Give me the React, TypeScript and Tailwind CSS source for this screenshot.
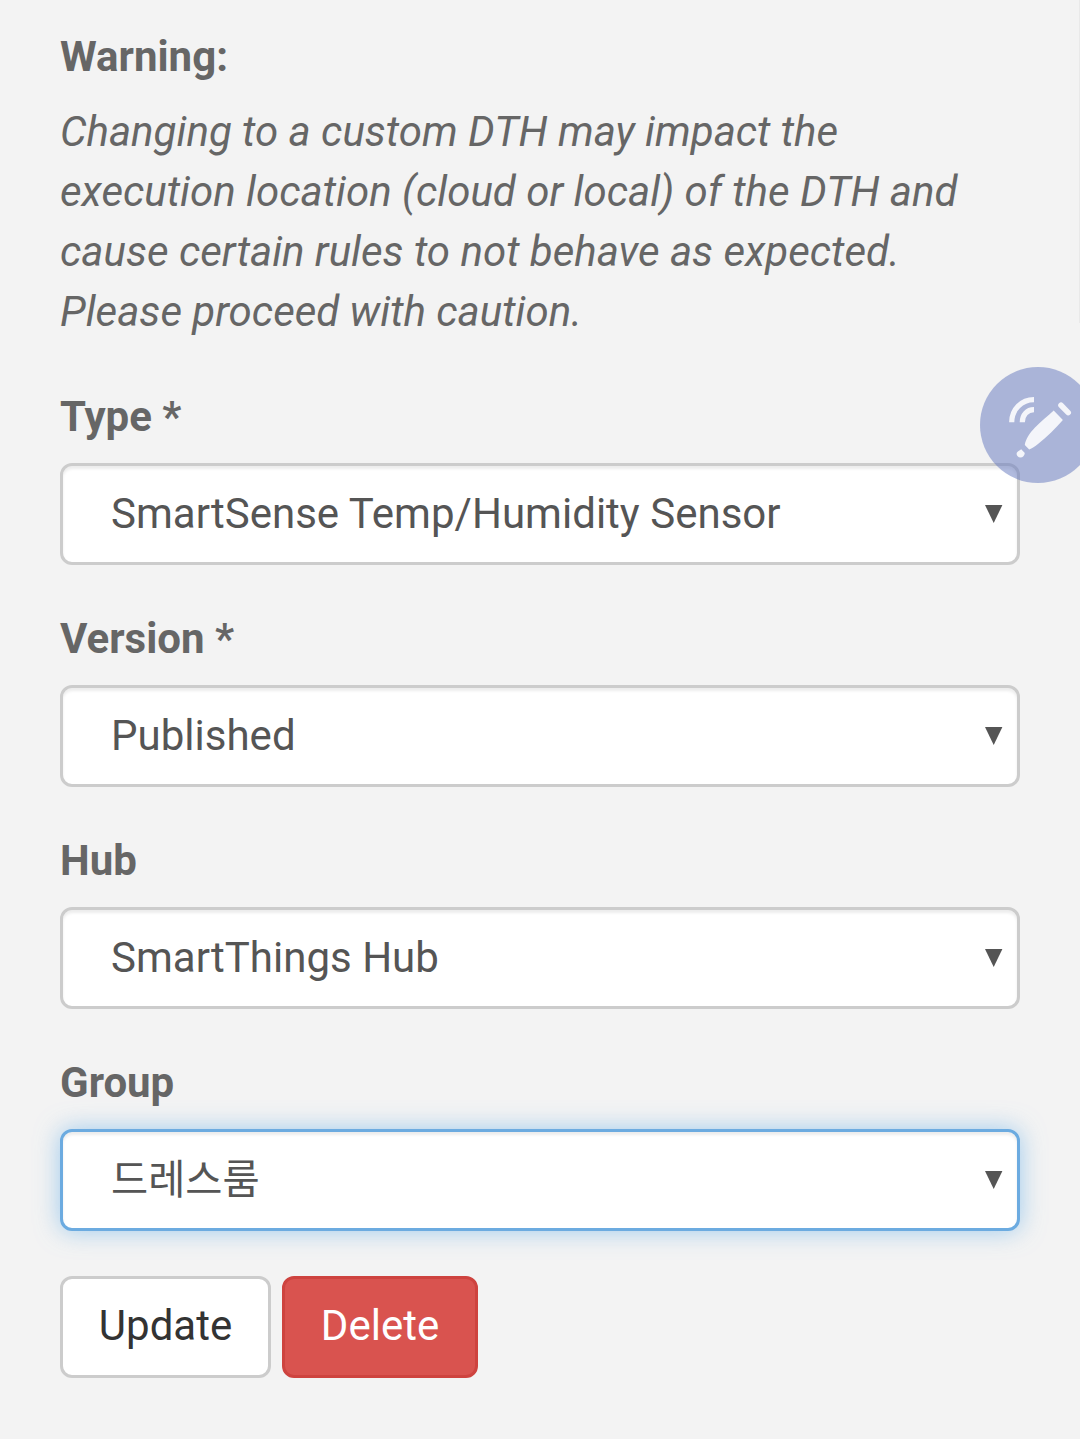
import React from "react";

type FieldProps = { label: string; value: string; focused?: boolean; korean?: boolean };

function Field({ label, value, focused = false, korean = false }: FieldProps) {
  return (
    <div className="mb-[44px]">
      <div className="mb-[16px] h-[60px] text-[42px] leading-[60px] font-bold text-[#666]">{label}</div>
      <button
        className={
          "flex h-[102px] w-full items-center justify-between rounded-[12px] border-3 bg-white pr-[14px] pl-[48px] text-[#555] " +
          (focused
            ? "border-[#6cabe0] shadow-[inset_0_3px_3px_rgba(0,0,0,0.075),0_0_24px_rgba(102,175,233,0.6)]"
            : "border-[#ccc] shadow-[inset_0_3px_3px_rgba(0,0,0,0.075)]")
        }
      >
        <span className={korean ? "pt-[2px] text-[40.4px] whitespace-nowrap" : "pb-[2px] text-[42px] tracking-[0.02px] whitespace-nowrap"}>{value}</span>
        <svg width="18" height="18" viewBox="0 0 18 18" fill="#555">
          <path d="M0 0H17.4L8.7 18Z" />
        </svg>
      </button>
    </div>
  );
}

function PenIcon() {
  return (
    <svg width="116" height="116" viewBox="0 0 116 116" fill="none">
      <g stroke="#f4f5fa" strokeWidth="5.2">
        <path d="M31.7 55.3C31.7 42.5 41.5 32.7 54 32.7" />
        <path d="M42.3 55.3C42.3 48 47 42.7 54 42.7" />
        <path d="M81 38.2L88.2 45.6" strokeWidth="5.6" strokeLinecap="round" />
      </g>
      <g fill="#f4f5fa">
        <path d="M73.7 43.6L82.9 53C75 61.8 67 69.9 58 77C55 79.4 52 81.4 49.2 82.4L44.8 78C45.6 72.5 49.5 66.2 55 60.6C61.2 54.4 67.5 49.2 73.7 43.6Z" />
        <path d="M41.2 82.2L44.8 86C44.6 88.7 42.8 90.5 40.5 90.5C38.2 90.5 36.6 88.8 36.6 86.8C36.6 84.9 38.6 84.2 41.2 82.2Z" />
      </g>
    </svg>
  );
}

export default function App() {
  return (
    <div className="relative h-[1439px] w-[1080px] overflow-hidden bg-[#f3f3f3] px-[60px] pt-[27px] font-[Roboto,'Noto_Sans_CJK_KR',sans-serif]">
      <div className="mb-[15px] text-[42px] leading-[60px] font-bold text-[#666]">Warning:</div>
      <p className="mb-[45px] text-[42px] leading-[60px] whitespace-nowrap text-[#666] italic">
        Changing to a custom DTH may impact the<br />
        execution location (cloud or local) of the DTH and<br />
        cause certain rules to not behave as expected.<br />
        Please proceed with caution.
      </p>
      <Field label="Type *" value="SmartSense Temp/Humidity Sensor" />
      <Field label="Version *" value="Published" />
      <Field label="Hub" value="SmartThings Hub" />
      <Field label="Group" value="드레스룸" focused korean />
      <div className="flex gap-[11px] pt-px text-[42px]">
        <button className="h-[102px] w-[211px] rounded-[12px] border-3 border-[#ccc] bg-white pb-[3px] text-[#333]">Update</button>
        <button className="h-[102px] w-[196px] rounded-[12px] border-3 border-[#ce433f] bg-[#d9534f] pb-[3px] text-white">Delete</button>
      </div>
      <div className="absolute top-0 right-0 h-[323px] w-px bg-[#e9e9e9]" />
      <div className="absolute top-[367px] left-[980px] h-[116px] w-[116px] rounded-full bg-[#6175bd]/50">
        <PenIcon />
      </div>
    </div>
  );
}
